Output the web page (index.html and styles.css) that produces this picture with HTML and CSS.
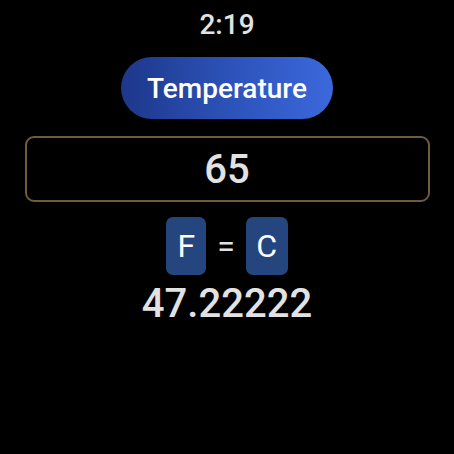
FILE: index.html
```html
<!DOCTYPE html>
<html>
<head>
<meta charset="utf-8">
<link rel="stylesheet" href="styles.css">
</head>
<body>
<div class="screen">
  <div class="time">2:19</div>
  <div class="pill">Temperature</div>
  <div class="input">65</div>
  <div class="units">
    <div class="unit">F</div>
    <div class="eq">=</div>
    <div class="unit unit-c">C</div>
  </div>
  <div class="result">47.22222</div>
</div>
</body>
</html>
```
FILE: styles.css
```css
html, body {
  margin: 0;
  padding: 0;
  background: #000;
}
.screen {
  width: 454px;
  height: 454px;
  display: flex;
  flex-direction: column;
  align-items: center;
  font-family: Roboto, "Liberation Sans", sans-serif;
  color: #e0e0e0;
}
.time {
  margin-top: 9px;
  height: 32px;
  line-height: 32px;
  font-size: 28px;
  font-weight: 500;
  color: #e2e2e2;
}
.pill {
  margin-top: 16px;
  width: 212px;
  height: 62px;
  border-radius: 31px;
  background: linear-gradient(90deg, #1d378a 0%, #2c52b8 50%, #3b68dc 100%);
  color: #fff;
  font-size: 28px;
  font-weight: 500;
  display: flex;
  align-items: center;
  justify-content: center;
}
.input {
  margin-top: 17px;
  box-sizing: border-box;
  width: 405px;
  height: 66px;
  border: 2px solid #6e5c3c;
  border-radius: 9px;
  display: flex;
  align-items: center;
  justify-content: center;
  font-size: 40px;
  font-weight: 500;
  color: #e2e2e2;
}
.units {
  margin-top: 15px;
  display: flex;
  align-items: center;
  gap: 11px;
}
.unit {
  width: 40px;
  height: 58px;
  border-radius: 7px;
  background: #24457e;
  color: #fff;
  font-size: 32px;
  display: flex;
  align-items: center;
  justify-content: center;
}
.unit-c {
  width: 42px;
}
.eq {
  font-size: 32px;
  color: #e2e2e2;
}
.result {
  margin-top: 5px;
  font-size: 40px;
  line-height: 48px;
  font-weight: 500;
  color: #e2e2e2;
}
```
